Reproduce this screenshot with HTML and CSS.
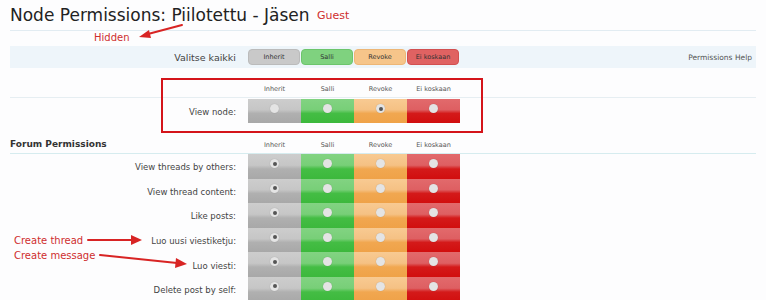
FILE: index.html
```html
<!DOCTYPE html>
<html lang="en">
<head>
    <meta charset="UTF-8">
    <title>Node Permissions</title>
    <link rel="stylesheet" href="styles.css">
</head>
<body>
<div class="page">
    <h1 class="title">Node Permissions: Piilotettu - Jäsen</h1>
    <span class="note note-guest">Guest</span>
    <span class="note note-hidden">Hidden</span>

    <div class="select-bar">
        <div class="label">Valitse kaikki</div>
        <span class="btn inherit">Inherit</span>
        <span class="btn allow">Salli</span>
        <span class="btn revoke">Revoke</span>
        <span class="btn never">Ei koskaan</span>
        <a class="help" href="#">Permissions Help</a>
    </div>

    <div class="node-section">
        <div class="heads">
            <div class="label"></div>
            <span>Inherit</span><span>Salli</span><span>Revoke</span><span>Ei koskaan</span>
        </div>
        <div class="row">
            <div class="label">View node:</div>
            <span class="cell inherit"><i class="radio"></i></span>
            <span class="cell allow"><i class="radio"></i></span>
            <span class="cell revoke"><i class="radio on"></i></span>
            <span class="cell never"><i class="radio"></i></span>
        </div>
    </div>

    <div class="heads forum-head">
        <div class="label group">Forum Permissions</div>
        <span>Inherit</span><span>Salli</span><span>Revoke</span><span>Ei koskaan</span>
    </div>
    <div class="rows">
        <div class="row">
            <div class="label">View threads by others:</div>
            <span class="cell inherit"><i class="radio on"></i></span>
            <span class="cell allow"><i class="radio"></i></span>
            <span class="cell revoke"><i class="radio"></i></span>
            <span class="cell never"><i class="radio"></i></span>
        </div>
        <div class="row">
            <div class="label">View thread content:</div>
            <span class="cell inherit"><i class="radio on"></i></span>
            <span class="cell allow"><i class="radio"></i></span>
            <span class="cell revoke"><i class="radio"></i></span>
            <span class="cell never"><i class="radio"></i></span>
        </div>
        <div class="row">
            <div class="label">Like posts:</div>
            <span class="cell inherit"><i class="radio on"></i></span>
            <span class="cell allow"><i class="radio"></i></span>
            <span class="cell revoke"><i class="radio"></i></span>
            <span class="cell never"><i class="radio"></i></span>
        </div>
        <div class="row">
            <div class="label">Luo uusi viestiketju:</div>
            <span class="cell inherit"><i class="radio on"></i></span>
            <span class="cell allow"><i class="radio"></i></span>
            <span class="cell revoke"><i class="radio"></i></span>
            <span class="cell never"><i class="radio"></i></span>
        </div>
        <div class="row">
            <div class="label">Luo viesti:</div>
            <span class="cell inherit"><i class="radio on"></i></span>
            <span class="cell allow"><i class="radio"></i></span>
            <span class="cell revoke"><i class="radio"></i></span>
            <span class="cell never"><i class="radio"></i></span>
        </div>
        <div class="row">
            <div class="label">Delete post by self:</div>
            <span class="cell inherit"><i class="radio on"></i></span>
            <span class="cell allow"><i class="radio"></i></span>
            <span class="cell revoke"><i class="radio"></i></span>
            <span class="cell never"><i class="radio"></i></span>
        </div>
    </div>

    <!-- annotations drawn over the screenshot -->
    <div class="red-box"></div>
    <span class="note note-thread">Create thread</span>
    <span class="note note-message">Create message</span>
    <svg class="arrows" width="766" height="300" viewBox="0 0 766 300">
        <g stroke="#d82424" stroke-width="2" fill="none" stroke-linecap="round">
            <line x1="182" y1="25" x2="148" y2="34"/>
            <line x1="88" y1="240" x2="132" y2="240"/>
            <line x1="100" y1="255" x2="177" y2="263"/>
        </g>
        <g fill="#d82424">
            <polygon points="139,37 149,30 151,38"/>
            <polygon points="142,240 131,235 131,245"/>
            <polygon points="187,264 176,258 175,268"/>
        </g>
    </svg>
</div>
</body>
</html>
```

FILE: styles.css
```css
body {
    margin: 0;
    padding: 0;
    background: #fdfdfe;
    font-family: "DejaVu Sans", Verdana, sans-serif;
    color: #333;
    overflow: hidden;
}
.page {
    position: relative;
    width: 746px;
    height: 300px;
    padding: 0 10px;
}
.title {
    margin: 0;
    height: 31px;
    box-sizing: border-box;
    padding-top: 4px;
    font-size: 17px;
    font-weight: normal;
    line-height: 22px;
    color: #222;
    border-bottom: 1px solid #e2ecf2;
}
.note {
    position: absolute;
    color: #cf2e2e;
    font-size: 10px;
    line-height: 14px;
    white-space: nowrap;
}
.note-guest { left: 317px; top: 9px; font-size: 11px; }
.note-hidden { left: 94px; top: 31px; }
.note-thread { left: 14px; top: 234px; }
.note-message { left: 14px; top: 249px; }

.label {
    width: 238px;
    box-sizing: border-box;
    padding-right: 12px;
    text-align: right;
    flex-shrink: 0;
}

.select-bar {
    display: flex;
    align-items: center;
    margin-top: 15px;
    height: 22px;
    background: #eef5fa;
    color: #444;
}
.select-bar .label { font-size: 9.5px; }
.btn {
    width: 52px;
    height: 16px;
    margin-right: 1px;
    border-radius: 4px;
    font-size: 6.5px;
    line-height: 14px;
    text-align: center;
    color: #333;
    box-sizing: border-box;
}
.btn.inherit { background: #c9c9c9; border: 1px solid #bbb; }
.btn.allow { background: #7fd27f; border: 1px solid #6cc56c; }
.btn.revoke { background: #f6c58a; border: 1px solid #edb676; }
.btn.never { background: #e06262; border: 1px solid #d25050; }
.help {
    margin-left: auto;
    padding-right: 4px;
    font-size: 7.5px;
    color: #555;
    text-decoration: none;
}

.node-section {
    margin-top: 10px;
}
.heads {
    display: flex;
    align-items: center;
    height: 19px;
    border-bottom: 1px solid #e6eef2;
    font-size: 6.5px;
    color: #555;
}
.heads span {
    width: 53px;
    text-align: center;
    padding-top: 3px;
}
.row {
    display: flex;
    align-items: center;
    height: 24.6px;
    font-size: 8.5px;
    color: #444;
}
.row .label { padding-top: 2px; }
.node-section .row { margin-top: 1px; height: 24px; }
.cell {
    width: 53px;
    height: 100%;
    display: flex;
    justify-content: center;
    padding-top: 5px;
    box-sizing: border-box;
}
.cell.inherit { background: linear-gradient(#cdcdcd 0%, #c6c6c6 45%, #b0b0b0 60%, #a8a8a8 100%); }
.cell.allow { background: linear-gradient(#82d382 0%, #78cf78 45%, #44bd44 60%, #3cb83c 100%); }
.cell.revoke { background: linear-gradient(#f8ca92 0%, #f5c184 45%, #f1a750 60%, #efa248 100%); }
.cell.never { background: linear-gradient(#e26a6c 0%, #de5f62 45%, #d41a1a 60%, #d10e0e 100%); }
.radio {
    width: 9px;
    height: 9px;
    border-radius: 50%;
    background: #e4e4e4;
    box-shadow: 0 0 1px rgba(0,0,0,0.25);
    position: relative;
}
.radio.on::after {
    content: "";
    position: absolute;
    left: 2.5px;
    top: 2.5px;
    width: 4px;
    height: 4px;
    border-radius: 50%;
    background: #555;
}

.forum-head {
    margin-top: 11px;
    border-bottom-color: #d6ecef;
}
.group {
    text-align: left;
    font-size: 9px;
    font-weight: bold;
    color: #333;
}

.red-box {
    position: absolute;
    left: 161px;
    top: 78px;
    width: 322px;
    height: 55px;
    box-sizing: border-box;
    border: 2px solid #d4141a;
}
.arrows {
    position: absolute;
    left: 0;
    top: 0;
}
```
